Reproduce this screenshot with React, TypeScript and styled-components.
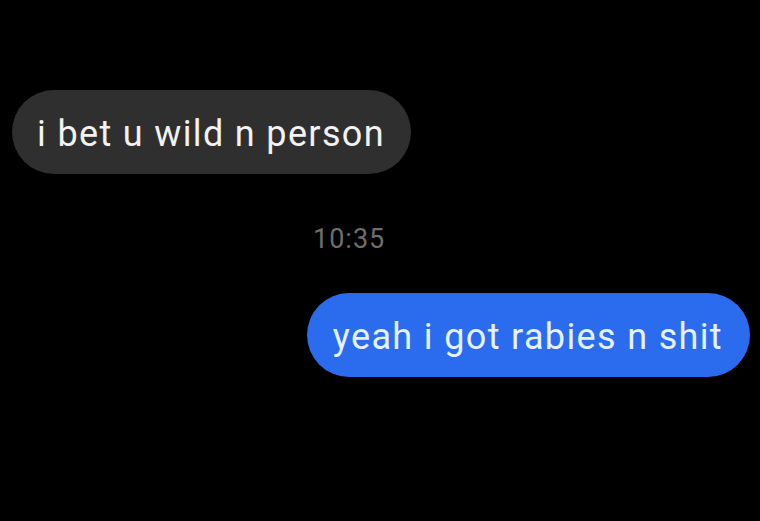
import React from "react";
import styled, { createGlobalStyle } from "styled-components";

const Global = createGlobalStyle`
  html, body { margin: 0; padding: 0; background: #000; }
  body { width: 760px; height: 521px; overflow: hidden; font-family: Roboto, "Liberation Sans", sans-serif; }
`;

const Thread = styled.div`
  display: flex;
  flex-direction: column;
  width: 760px;
  height: 521px;
  background: #000;
  padding: 90px 10px 0 12px;
  box-sizing: border-box;
`;

const Row = styled.div<{ $mine?: boolean }>`
  display: flex;
  justify-content: ${(p) => (p.$mine ? "flex-end" : "flex-start")};
`;

const Bubble = styled.div<{ $mine?: boolean }>`
  height: 84px;
  box-sizing: border-box;
  display: flex;
  align-items: center;
  padding: ${(p) => (p.$mine ? "3px 27px 0 26px" : "3px 26px 0 25px")};
  border-radius: 42px;
  background: ${(p) => (p.$mine ? "#2b6cef" : "#2f2f2f")};
  color: ${(p) => (p.$mine ? "#e6f2ff" : "#f2f2f2")};
  font-size: 36px;
  letter-spacing: 1.35px;
  white-space: nowrap;
`;

const Time = styled.div`
  margin: 50px 0 39px 301px;
  color: #6e6e6e;
  font-size: 27px;
  letter-spacing: 1px;
  line-height: 30px;
`;

export default function App() {
  return (
    <>
      <Global />
      <Thread>
        <Row>
          <Bubble>i bet u wild n person</Bubble>
        </Row>
        <Time>10:35</Time>
        <Row $mine>
          <Bubble $mine>yeah i got rabies n shit</Bubble>
        </Row>
      </Thread>
    </>
  );
}
